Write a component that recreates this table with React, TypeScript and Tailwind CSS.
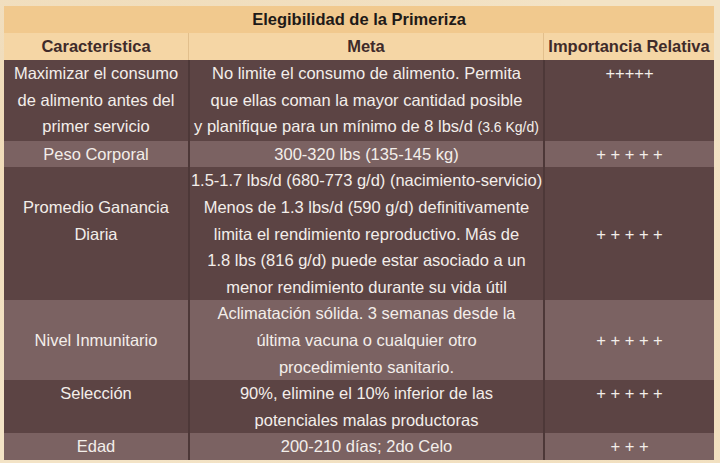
import React from 'react'

type Row = {
  caract: React.ReactNode
  meta: React.ReactNode
  imp: string
  light: boolean
  align: 'top' | 'center' | 'second'
}

const rows: Row[] = [
  {
    caract: (
      <>
        Maximizar el consumo<br />de alimento antes del<br />primer servicio
      </>
    ),
    meta: (
      <>
        No limite el consumo de alimento. Permita<br />
        que ellas coman la mayor cantidad posible<br />
        y planifique para un mínimo de 8 lbs/d <span className="text-[14px]">(3.6 Kg/d)</span>
      </>
    ),
    imp: '+++++',
    light: false,
    align: 'top',
  },
  {
    caract: 'Peso Corporal',
    meta: '300-320 lbs (135-145 kg)',
    imp: '+ + + + +',
    light: true,
    align: 'center',
  },
  {
    caract: (
      <>
        Promedio Ganancia<br />Diaria
      </>
    ),
    meta: (
      <>
        1.5-1.7 lbs/d (680-773 g/d) (nacimiento-servicio)<br />
        Menos de 1.3 lbs/d (590 g/d) definitivamente<br />
        limita el rendimiento reproductivo. Más de<br />
        1.8 lbs (816 g/d) puede estar asociado a un<br />
        menor rendimiento durante su vida útil
      </>
    ),
    imp: '+ + + + +',
    light: false,
    align: 'second',
  },
  {
    caract: 'Nivel Inmunitario',
    meta: (
      <>
        Aclimatación sólida. 3 semanas desde la<br />
        última vacuna o cualquier otro<br />
        procedimiento sanitario.
      </>
    ),
    imp: '+ + + + +',
    light: true,
    align: 'center',
  },
  {
    caract: 'Selección',
    meta: (
      <>
        90%, elimine el 10% inferior de las<br />
        potenciales malas productoras
      </>
    ),
    imp: '+ + + + +',
    light: false,
    align: 'top',
  },
  {
    caract: 'Edad',
    meta: '200-210 días; 2do Celo',
    imp: '+ + +',
    light: true,
    align: 'center',
  },
]

export default function App() {
  return (
    <div
      className="w-[720px] h-[463px] overflow-hidden bg-[#f3e3c6] pt-[6px] pl-[4px]"
      style={{
        fontFamily: '"Liberation Sans", Arial, sans-serif',
        backgroundImage:
          'radial-gradient(ellipse at 20% 30%, rgba(235,210,170,0.6), transparent 60%), radial-gradient(ellipse at 80% 80%, rgba(240,220,185,0.7), transparent 55%)',
      }}
    >
      <div className="w-[710px] text-[16.5px] leading-[26.6px]">
        {/* Title */}
        <div className="h-[27px] bg-[#f1c98e] text-center font-bold text-[#1e1a18] leading-[27px]">
          Elegibilidad de la Primeriza
        </div>

        {/* Header */}
        <div className="grid grid-cols-[184px_355px_171px] h-[27px] bg-[#f5d6a5] font-bold text-[#3f2b2a] leading-[27px] text-center">
          <div>Característica</div>
          <div className="border-l border-[#e2bf8c]">Meta</div>
          <div className="border-l border-[#e2bf8c]">Importancia Relativa</div>
        </div>

        {/* Rows */}
        {rows.map((row, i) => (
          <div
            key={i}
            className={
              'grid grid-cols-[184px_355px_171px] text-center text-[#f3eeea] ' +
              (row.light ? 'bg-[#7b6262]' : 'bg-[#5c4444]')
            }
          >
            <div
              className={
                'flex justify-center ' +
                (row.align === 'top' ? 'items-start' : row.align === 'second' ? 'items-start pt-[26.6px]' : 'items-center')
              }
            >
              <div>{row.caract}</div>
            </div>
            <div className="flex items-center justify-center whitespace-nowrap border-l-2 border-[#4d3838]">
              <div>{row.meta}</div>
            </div>
            <div
              className={
                'flex justify-center border-l-2 border-[#4d3838] ' +
                (row.align === 'top' ? 'items-start' : 'items-center')
              }
            >
              <div>{row.imp}</div>
            </div>
          </div>
        ))}
      </div>
    </div>
  )
}
